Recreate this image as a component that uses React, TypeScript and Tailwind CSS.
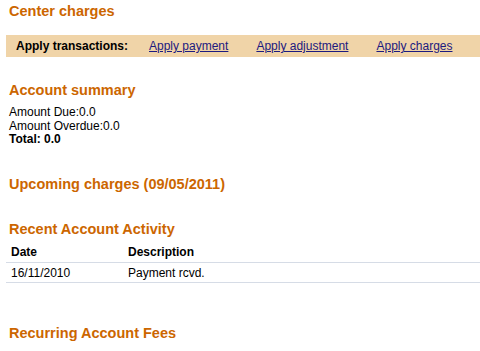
const links = ['Apply payment', 'Apply adjustment', 'Apply charges'];

const activity = [{ date: '16/11/2010', description: 'Payment rcvd.' }];

function Heading({ children, className = '' }: { children: React.ReactNode; className?: string }) {
  return (
    <h2 className={`pl-[3px] text-[14.5px] font-bold leading-[17px] text-[#cc6600] ${className}`}>
      {children}
    </h2>
  );
}

export default function App() {
  return (
    <div className="min-h-[351px] bg-white pl-[6px] pt-[3px] font-['Liberation_Sans',Arial,sans-serif] text-[12px] text-black">
      <Heading>Center charges</Heading>

      <div className="mt-[15px] flex h-[22px] items-center bg-[#f0d4a8] pl-[10px] leading-[14px]">
        <span className="w-[133px] font-bold">Apply transactions:</span>
        {links.map((label, i) => (
          <a key={label} href="#" className={`text-[#1c1a80] underline ${i > 0 ? 'ml-[28px]' : ''}`}>
            {label}
          </a>
        ))}
      </div>

      <Heading className="mt-[25px]">Account summary</Heading>
      <div className="mt-[7px] pl-[3px] leading-[13.5px]">
        <div>Amount Due:0.0</div>
        <div>Amount Overdue:0.0</div>
        <div className="font-bold">Total: 0.0</div>
      </div>

      <Heading className="mt-[29px]">Upcoming charges (09/05/2011)</Heading>

      <Heading className="mt-[28px]">Recent Account Activity</Heading>
      <table className="mt-[4px] w-[474px] border-collapse text-left leading-[14px]">
        <thead>
          <tr className="border-b border-[#d6dce6]">
            <th className="w-[117px] px-[5px] py-[3px] font-bold">Date</th>
            <th className="px-[5px] py-[3px] font-bold">Description</th>
          </tr>
        </thead>
        <tbody>
          {activity.map((row) => (
            <tr key={row.date} className="border-b border-[#d6dce6]">
              <td className="px-[5px] pb-[2px] pt-[3px]">{row.date}</td>
              <td className="px-[5px] pb-[2px] pt-[3px]">{row.description}</td>
            </tr>
          ))}
        </tbody>
      </table>

      <Heading className="mt-[42px]">Recurring Account Fees</Heading>
    </div>
  );
}
